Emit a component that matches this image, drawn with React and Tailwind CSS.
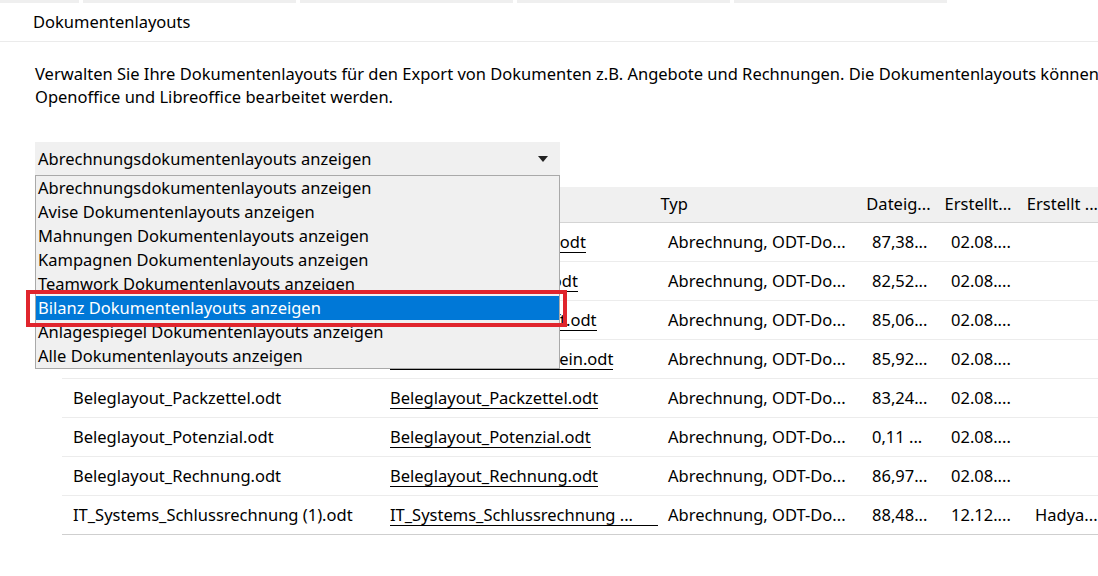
import React from "react";

const rows = [
  { name: "Beleglayout_Angebot.odt", link: "Beleglayout_Angebot.odt", size: "87,38...", date: "02.08....", by: "" },
  { name: "Beleglayout_Auftrag.odt", link: "Beleglayout_Auftrag.odt", size: "82,52...", date: "02.08....", by: "" },
  { name: "Beleglayout_Gutschrift.odt", link: "Beleglayout_Gutschrift.odt", size: "85,06...", date: "02.08....", by: "" },
  { name: "Beleglayout_Lieferschein.odt", link: "Beleglayout_Lieferschein.odt", size: "85,92...", date: "02.08....", by: "" },
  { name: "Beleglayout_Packzettel.odt", link: "Beleglayout_Packzettel.odt", size: "83,24...", date: "02.08....", by: "" },
  { name: "Beleglayout_Potenzial.odt", link: "Beleglayout_Potenzial.odt", size: "0,11 ...", date: "02.08....", by: "" },
  { name: "Beleglayout_Rechnung.odt", link: "Beleglayout_Rechnung.odt", size: "86,97...", date: "02.08....", by: "" },
  { name: "IT_Systems_Schlussrechnung (1).odt", link: "IT_Systems_Schlussrechnung ...", size: "88,48...", date: "12.12....", by: "Hadya...", trunc: true },
];

const options = [
  "Abrechnungsdokumentenlayouts anzeigen",
  "Avise Dokumentenlayouts anzeigen",
  "Mahnungen Dokumentenlayouts anzeigen",
  "Kampagnen Dokumentenlayouts anzeigen",
  "Teamwork Dokumentenlayouts anzeigen",
  "Bilanz Dokumentenlayouts anzeigen",
  "Anlagespiegel Dokumentenlayouts anzeigen",
  "Alle Dokumentenlayouts anzeigen",
];

export default function App() {
  return (
    <div className="relative w-[1098px] h-[576px] overflow-hidden bg-white text-[16.5px] text-black font-['Noto_Sans',sans-serif]">
      {/* top strip */}
      <div className="flex gap-[4px] h-[3px]">
        <div className="w-[79px] bg-[#efefef]" />
        <div className="w-[213px] bg-[#efefef]" />
        <div className="w-[213px] bg-[#efefef]" />
        <div className="w-[213px] bg-[#efefef]" />
        <div className="w-[213px] bg-[#efefef]" />
      </div>
      {/* title */}
      <div className="h-[39px] flex items-center pl-[33px] border-b border-[#ebebeb]">
        Dokumentenlayouts
      </div>
      {/* description */}
      <div className="pt-[20px] pl-[35px] leading-[23px] whitespace-nowrap">
        <div>
          Verwalten Sie Ihre Dokumentenlayouts für den Export von Dokumenten z.B. Angebote und Rechnungen. Die Dokumentenlayouts können mit Microsoft Word,
        </div>
        <div>Openoffice und Libreoffice bearbeitet werden.</div>
      </div>
      {/* combobox */}
      <div className="mt-[34px] ml-[35px] w-[525px] h-[34px] bg-[#f0f0f0] flex items-center justify-between pl-[3px] pr-[12px]">
        <span>Abrechnungsdokumentenlayouts anzeigen</span>
        <svg width="10" height="6" viewBox="0 0 10 6">
          <path d="M0 0 L10 0 L5 6 Z" fill="#222" />
        </svg>
      </div>
      {/* table */}
      <div className="mt-[11px] ml-[62px]">
        <div className="h-[36px] flex items-center bg-[#f0f0f0] border-b border-[#d4d4d4]">
          <div className="w-[318px]" />
          <div className="w-[278px]" />
          <div className="w-[204px] pl-[9px]">Typ</div>
          <div className="w-[79px] pl-[13px]">Dateig...</div>
          <div className="w-[84px] pl-[13px]">Erstellt...</div>
          <div className="flex-1 pl-[12px] whitespace-nowrap">Erstellt ...</div>
        </div>
        {rows.map((r, i) => (
          <div
            key={i}
            className={
              "h-[39px] flex items-center whitespace-nowrap border-b " +
              (i === rows.length - 1 ? "border-[#cfcfcf]" : "border-[#ececec]")
            }
          >
            <div className="w-[318px] pl-[11px]">{r.name}</div>
            <div className="w-[278px] pl-[10px]">
              {r.trunc ? (
                <span className="inline-block w-[268px] border-b border-black leading-[20px]">{r.link}</span>
              ) : (
                <span className="inline-block border-b border-black leading-[20px]">{r.link}</span>
              )}
            </div>
            <div className="w-[204px] pl-[10px]">Abrechnung, ODT-Do...</div>
            <div className="w-[79px] pl-[10px]">{r.size}</div>
            <div className="w-[84px] pl-[10px]">{r.date}</div>
            <div className="flex-1 pl-[10px]">{r.by}</div>
          </div>
        ))}
      </div>
      {/* dropdown list overlay */}
      <div className="absolute left-[35px] top-[175px] w-[525px] bg-[#f0f0f0] border border-[#a9a9a9]">
        {options.map((o, i) => (
          <div
            key={i}
            className={
              "h-[24px] flex items-center pl-[2px] whitespace-nowrap " +
              (i === 5 ? "bg-[#0078d7] text-white" : "")
            }
          >
            {o}
          </div>
        ))}
      </div>
      {/* red highlight */}
      <div className="absolute left-[26px] top-[290px] w-[541px] h-[37px] border-[4px] border-[#e0252d]" />
    </div>
  );
}
